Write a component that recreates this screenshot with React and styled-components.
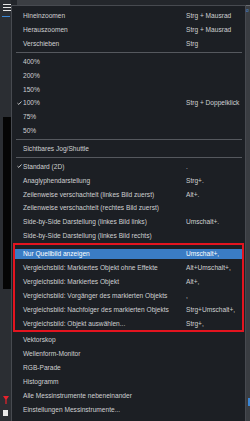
import styled, { createGlobalStyle } from 'styled-components';

const GlobalStyle = createGlobalStyle`
    html, body {
        margin: 0;
        padding: 0;
        background: #2a2d32;
    }
    body {
        font-family: "Liberation Sans", Arial, sans-serif;
    }
`;

const sections = [
    [
        { label: 'Hineinzoomen', keys: 'Strg + Mausrad' },
        { label: 'Herauszoomen', keys: 'Strg + Mausrad' },
        { label: 'Verschieben', keys: 'Strg' }
    ],
    [
        { label: '400%' },
        { label: '200%' },
        { label: '150%' },
        { label: '100%', keys: 'Strg + Doppelklick', checked: true },
        { label: '75%' },
        { label: '50%' }
    ],
    [
        { label: 'Sichtbares Jog/Shuttle' }
    ],
    [
        { label: 'Standard (2D)', keys: '.', checked: true },
        { label: 'Anaglyphendarstellung', keys: 'Strg+.' },
        { label: 'Zeilenweise verschachtelt (linkes Bild zuerst)', keys: 'Alt+.' },
        { label: 'Zeilenweise verschachtelt (rechtes Bild zuerst)' },
        { label: 'Side-by-Side Darstellung (linkes Bild links)', keys: 'Umschalt+.' },
        { label: 'Side-by-Side Darstellung (linkes Bild rechts)' }
    ]
];

const compare = [
    { label: 'Nur Quellbild anzeigen', keys: 'Umschalt+,', active: true },
    { label: 'Vergleichsbild: Markiertes Objekt ohne Effekte', keys: 'Alt+Umschalt+,' },
    { label: 'Vergleichsbild: Markiertes Objekt', keys: 'Alt+,' },
    { label: 'Vergleichsbild: Vorgänger des markierten Objekts', keys: ',' },
    { label: 'Vergleichsbild: Nachfolger des markierten Objekts', keys: 'Strg+Umschalt+,' },
    { label: 'Vergleichsbild: Objekt auswählen...', keys: 'Strg+,' }
];

const scopes = [
    { label: 'Vektorskop' },
    { label: 'Wellenform-Monitor' },
    { label: 'RGB-Parade' },
    { label: 'Histogramm' },
    { label: 'Alle Messinstrumente nebeneinander' },
    { label: 'Einstellungen Messinstrumente...' }
];

const Check = () => (
    <svg width="5" height="4" viewBox="0 0 5 4">
        <path d="M0.5 2.2 L1.8 3.4 L4.5 0.5" fill="none" stroke="#d8d8d8" strokeWidth="0.9" />
    </svg>
);

const Item = ({ label, keys, checked, active, inset }) => (
    <Row $active={active} $inset={inset}>
        <Mark>{checked && <Check />}</Mark>
        <Label>{label}</Label>
        <Keys>{keys}</Keys>
    </Row>
);

const App = () => {
    return (
        <>
            <GlobalStyle />
            <Screen>
                <LeftRail>
                    <Burger>
                        <span />
                        <span />
                        <span />
                    </Burger>
                    <Underline />
                    <BlackPanel />
                    <Funnel>
                        <svg width="6" height="8" viewBox="0 0 6 8">
                            <path d="M0 0 H6 L3.6 3.5 V8 H2.4 V3.5 Z" fill="#e8222c" />
                        </svg>
                    </Funnel>
                    <WhiteSquare />
                </LeftRail>
                <Center>
                    <TopStrip>
                        <Field />
                    </TopStrip>
                    <Menu>
                        {sections.map((section, i) => (
                            <div key={i}>
                                {i > 0 && <Separator />}
                                {section.map((item) => <Item key={item.label} {...item} />)}
                            </div>
                        ))}
                        <Marked>
                            {compare.map((item) => <Item key={item.label} {...item} inset />)}
                        </Marked>
                        {scopes.map((item) => <Item key={item.label} {...item} />)}
                    </Menu>
                </Center>
                <RightRail>
                    <RightTop />
                    <RightLetter>o</RightLetter>
                    <RightBlue />
                </RightRail>
            </Screen>
        </>
    );
};

const Screen = styled.div`
    display: flex;
    width: 250px;
    height: 421px;
    overflow: hidden;
    background: #2a2d32;
`;

const LeftRail = styled.div`
    width: 11px;
    flex-shrink: 0;
    display: flex;
    flex-direction: column;
    align-items: flex-start;
    background: #2b2e33;
`;

const Burger = styled.div`
    display: flex;
    flex-direction: column;
    gap: 2px;
    margin: 4px 0 0 3px;

    span {
        display: block;
        width: 9px;
        height: 1px;
        background: #e6e6e6;
    }
`;

const Underline = styled.div`
    width: 8px;
    height: 1px;
    margin: 5px 0 0 2px;
    background: #3b86d4;
`;

const BlackPanel = styled.div`
    width: 8px;
    height: 172px;
    margin: 100px 0 0 3px;
    background: #050505;
`;

const Funnel = styled.div`
    display: flex;
    margin: 107px 0 0 3px;
`;

const WhiteSquare = styled.div`
    width: 5px;
    height: 6px;
    margin: 6px 0 0 3px;
    background: #e9e9e9;
`;

const Center = styled.div`
    flex: 1;
    display: flex;
    flex-direction: column;
`;

const TopStrip = styled.div`
    height: 5px;
    flex-shrink: 0;
    background: #23262b;
`;

const Field = styled.div`
    width: 53px;
    height: 5px;
    margin-left: 6px;
    background: #3b3e43;
`;

const Menu = styled.div`
    flex: 1;
    background: #1c1f24;
    border: 1px solid #474a50;
    border-bottom: none;
    padding: 3px 0 0;
    color: #cfd0d2;
`;

const Row = styled.div`
    display: grid;
    grid-template-columns: ${({ $inset }) => ($inset ? '8px' : '11px')} 162px 1fr;
    align-items: center;
    height: 13.85px;
    font-size: 6.6px;
    white-space: nowrap;
    background: ${({ $active }) => ($active ? '#3a7cc4' : 'transparent')};
    color: ${({ $active }) => ($active ? '#ffffff' : 'inherit')};
    background-clip: content-box;
    padding: ${({ $active }) => ($active ? '2px 0' : '0')};
    box-sizing: border-box;
`;

const Mark = styled.span`
    display: flex;
    justify-content: flex-end;
    padding-right: 1px;
`;

const Label = styled.span`
    overflow: visible;
`;

const Keys = styled.span`
    padding-left: 1px;
`;

const Separator = styled.div`
    height: 1px;
    margin: 1.5px 3px 1.5px 4px;
    background: #55585e;
`;

const Marked = styled.div`
    margin: 0.5px 1px 1px;
    border: 2px solid #e3141f;
    padding-top: 2px;
`;

const RightRail = styled.div`
    width: 4px;
    flex-shrink: 0;
    display: flex;
    flex-direction: column;
    background: #3a3d42;
`;

const RightTop = styled.div`
    height: 5px;
    background: #23262b;
    border-bottom: 1px solid #6a6d72;
`;

const RightLetter = styled.div`
    font-size: 5px;
    line-height: 8px;
    color: #4a8fd6;
    margin-left: 0;
`;

const RightBlue = styled.div`
    width: 2px;
    height: 8px;
    margin: 384px 0 0 2px;
    background: #3b86d4;
`;

export default App;
